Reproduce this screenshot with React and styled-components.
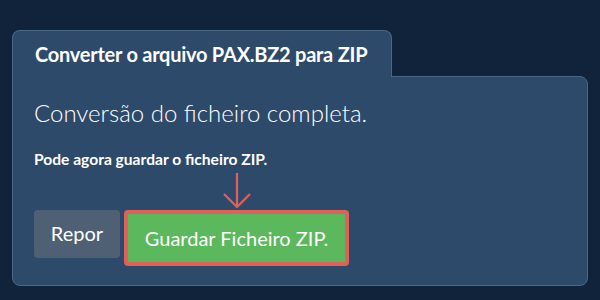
import React from 'react'
import styled, { createGlobalStyle } from 'styled-components'

const Global = createGlobalStyle`
  html, body {
    margin: 0;
    padding: 0;
    background: #11233a;
  }
  body {
    font-family: Lato, "Noto Sans", sans-serif;
    color: #fff;
  }
`

const Page = styled.div`
  width: 600px;
  height: 300px;
  box-sizing: border-box;
  padding: 30px 12px 0 12px;
`

const Tab = styled.div`
  position: relative;
  z-index: 1;
  width: 380px;
  height: 47px;
  box-sizing: border-box;
  margin-bottom: -1px;
  padding-left: 22px;
  display: flex;
  align-items: center;
  background: #2e4a6b;
  border: 1px solid #4c6687;
  border-bottom: none;
  border-radius: 8px 8px 0 0;
  font-size: 20px;
  font-weight: 700;
  letter-spacing: -0.25px;
  padding-bottom: 1px;
`

const Panel = styled.div`
  width: 576px;
  height: 210px;
  box-sizing: border-box;
  padding: 21px 22px 0 21px;
  background: #2e4a6b;
  border: 1px solid #4c6687;
  border-radius: 0 8px 8px 8px;
`

const Heading = styled.div`
  font-size: 24px;
  font-weight: 300;
  line-height: 30px;
`

const Note = styled.div`
  margin-top: 21px;
  font-size: 15.6px;
  font-weight: 700;
  line-height: 20px;
`

const Buttons = styled.div`
  margin-top: 41px;
  display: flex;
  align-items: flex-start;
  gap: 4px;
`

const Button = styled.button`
  position: relative;
  box-sizing: border-box;
  font-family: Lato, "Noto Sans", sans-serif;
  font-size: 20px;
  font-weight: 400;
  color: #fff;
  cursor: pointer;
  border-radius: 4px;
  background: ${p => (p.$primary ? '#5cb85c' : '#4f6074')};
  border: ${p => (p.$primary ? '4px solid #e0605b' : 'none')};
  height: ${p => (p.$primary ? '56px' : '48px')};
  width: ${p => (p.$primary ? '225px' : '86px')};
  padding: 0;
  display: flex;
  align-items: center;
  justify-content: center;
  padding-bottom: ${p => (p.$primary ? '0' : '2px')};
`

const Arrow = styled.svg`
  position: absolute;
  left: 50%;
  top: -42px;
  transform: translateX(-50%);
`

export default function App() {
  return (
    <Page>
      <Global />
      <Tab>Converter o arquivo PAX.BZ2 para ZIP</Tab>
      <Panel>
        <Heading>Conversão do ficheiro completa.</Heading>
        <Note>Pode agora guardar o ficheiro ZIP.</Note>
        <Buttons>
          <Button>Repor</Button>
          <Button $primary>
            <Arrow width="30" height="38" viewBox="0 0 30 38">
              <path d="M15 1 V35 M2 22 L15 35 L28 22" fill="none" stroke="#e0605b" strokeWidth="2.2" />
            </Arrow>
            Guardar Ficheiro ZIP.
          </Button>
        </Buttons>
      </Panel>
    </Page>
  )
}
